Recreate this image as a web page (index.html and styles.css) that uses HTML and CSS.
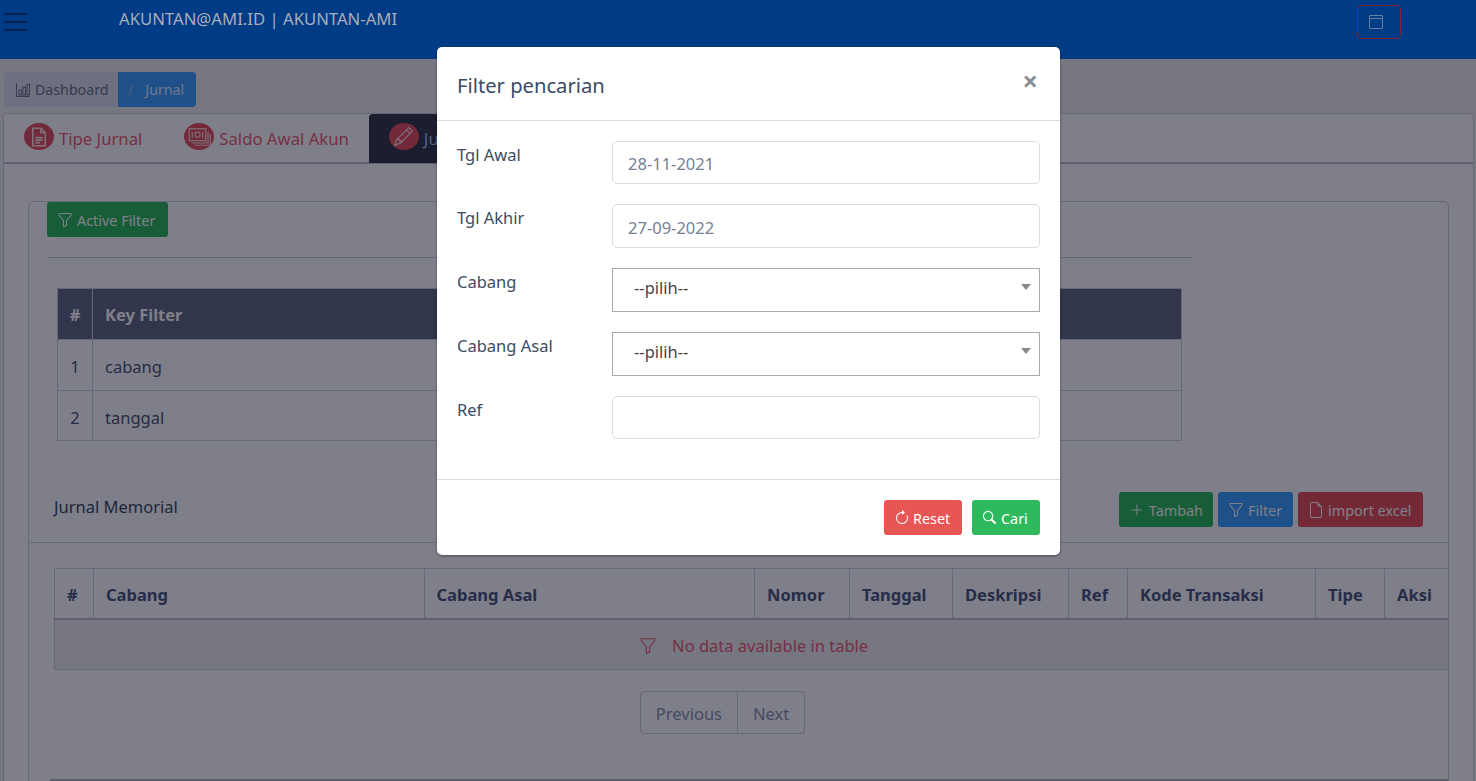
FILE: index.html
```html
<!DOCTYPE html>
<html>
<head>
  <title>Jurnal Memorial</title>
  <link rel="stylesheet" href="styles.css">
</head>
<body>
  <header class="topbar">
    <div class="burger"><span></span><span></span><span></span></div>
    <div class="user-name">AKUNTAN@AMI.ID | AKUNTAN-AMI</div>
    <button class="window-btn">
      <svg width="16" height="16" viewBox="0 0 16 16" fill="none" stroke="currentColor"><rect x="1.500" y="1.500" width="13" height="13" rx="0.500"/><path d="M1.500 4.500h13"/></svg>
    </button>
  </header>

  <nav class="crumbs">
    <a class="crumb crumb-home">
      <svg width="16" height="16" viewBox="0 0 16 16" fill="none" stroke="currentColor"><path d="M1.500 1.500v13h13"/><rect x="4" y="8" width="2.500" height="5"/><rect x="8" y="5" width="2.500" height="8"/><rect x="12" y="2.500" width="2.500" height="10.500"/></svg>
      Dashboard
    </a>
    <a class="crumb crumb-active"><span class="slash">/</span> Jurnal</a>
  </nav>

  <section class="tab-card">
    <div class="tabs">
      <a class="tab">
        <span class="tab-icon"><svg width="20" height="20" viewBox="0 0 16 16" fill="none" stroke="currentColor" stroke-width="1.300"><path d="M3 1h6.500L13 4.500V15H3z"/><path d="M9.500 1v3.500H13"/><path d="M5 8.500h6M5 10.500h6M5 12.500h4"/></svg></span>
        Tipe Jurnal
      </a>
      <a class="tab">
        <span class="tab-icon"><svg width="24" height="24" viewBox="0 0 16 16" fill="none" stroke="currentColor" stroke-width="0.800"><rect x="1.500" y="2.500" width="11" height="8"/><circle cx="7" cy="6.500" r="1.700"/><path d="M3.500 4.500v4M10.500 4.500v4"/><path d="M14 4.500v7.500H3M15.500 6v7.500H5"/></svg></span>
        Saldo Awal Akun
      </a>
      <a class="tab tab-active">
        <span class="tab-icon"><svg width="19" height="19" viewBox="0 0 16 16" fill="currentColor"><path d="M12.146.146a.5.5 0 0 1 .708 0l3 3a.5.5 0 0 1 0 .708l-10 10a.5.5 0 0 1-.168.11l-5 2a.5.5 0 0 1-.65-.65l2-5a.5.5 0 0 1 .11-.168l10-10zM11.207 2.500 13.500 4.793 14.793 3.500 12.500 1.207 11.207 2.500zm1.586 3L10.500 3.207 4 9.707V10h.5a.5.5 0 0 1 .5.5v.5h.5a.5.5 0 0 1 .5.5v.5h.293l6.500-6.500zm-9.761 5.175-.106.106-1.528 3.821 3.821-1.528.106-.106A.5.500 0 0 1 5 12.500V12h-.5a.5.500 0 0 1-.5-.5V11h-.5a.5.500 0 0 1-.468-.325z"/></svg></span>
        Jurnal Memorial
      </a>
    </div>

    <div class="tab-body">
      <div class="inner-card">
        <div class="filter-box">
          <button class="btn btn-green btn-active-filter">
            <svg class="funnel" width="16" height="16" viewBox="0 0 16 16" fill="currentColor"><path d="M1.500 1.500A.5.500 0 0 1 2 1h12a.5.500 0 0 1 .5.5v2a.5.500 0 0 1-.128.334L10 8.692V13.500a.5.500 0 0 1-.342.474l-3 1A.5.500 0 0 1 6 14.500V8.692L1.628 3.834A.5.500 0 0 1 1.500 3.500v-2zm1 .5v1.308l4.372 4.858A.5.500 0 0 1 7 8.500v5.306l2-.666V8.500a.5.500 0 0 1 .128-.334L13.500 3.308V2h-11z"/></svg>
            Active Filter
          </button>
          <hr class="rule">
          <table class="key-table">
            <thead>
              <tr><th class="col-no">#</th><th>Key Filter</th></tr>
            </thead>
            <tbody>
              <tr><td class="col-no">1</td><td>cabang</td></tr>
              <tr><td class="col-no">2</td><td>tanggal</td></tr>
            </tbody>
          </table>
        </div>

        <div class="list-head">
          <span class="list-title">Jurnal Memorial</span>
          <div class="list-actions">
            <button class="btn btn-green btn-tambah">
              <svg width="16" height="16" viewBox="0 0 16 16" fill="none" stroke="currentColor"><path d="M8 2.500v11M2.500 8h11"/></svg>
              Tambah
            </button>
            <button class="btn btn-blue btn-filter">
              <svg class="funnel" width="16" height="16" viewBox="0 0 16 16" fill="currentColor"><path d="M1.500 1.500A.5.500 0 0 1 2 1h12a.5.500 0 0 1 .5.5v2a.5.500 0 0 1-.128.334L10 8.692V13.500a.5.500 0 0 1-.342.474l-3 1A.5.500 0 0 1 6 14.500V8.692L1.628 3.834A.5.500 0 0 1 1.500 3.500v-2zm1 .5v1.308l4.372 4.858A.5.500 0 0 1 7 8.500v5.306l2-.666V8.500a.5.500 0 0 1 .128-.334L13.500 3.308V2h-11z"/></svg>
              Filter
            </button>
            <button class="btn btn-red btn-import">
              <svg width="16" height="16" viewBox="0 0 16 16" fill="currentColor"><path d="M14 4.500V14a2 2 0 0 1-2 2H4a2 2 0 0 1-2-2V2a2 2 0 0 1 2-2h5.500L14 4.500zm-3 0A1.500 1.500 0 0 1 9.500 3V1H4a1 1 0 0 0-1 1v12a1 1 0 0 0 1 1h8a1 1 0 0 0 1-1V4.500h-2z"/></svg>
              import excel
            </button>
          </div>
        </div>

        <table class="data-table">
          <thead>
            <tr>
              <th class="w-no">#</th>
              <th class="w-cabang">Cabang</th>
              <th class="w-cabang">Cabang Asal</th>
              <th class="w-nomor">Nomor</th>
              <th class="w-tanggal">Tanggal</th>
              <th class="w-desk">Deskripsi</th>
              <th class="w-ref">Ref</th>
              <th class="w-kode">Kode Transaksi</th>
              <th class="w-tipe">Tipe</th>
              <th>Aksi</th>
            </tr>
          </thead>
          <tbody>
            <tr>
              <td colspan="10" class="empty">
                <svg width="18" height="18" viewBox="0 0 16 16" fill="currentColor"><path d="M1.500 1.500A.5.500 0 0 1 2 1h12a.5.500 0 0 1 .5.5v2a.5.500 0 0 1-.128.334L10 8.692V13.500a.5.500 0 0 1-.342.474l-3 1A.5.500 0 0 1 6 14.500V8.692L1.628 3.834A.5.500 0 0 1 1.500 3.500v-2zm1 .5v1.308l4.372 4.858A.5.500 0 0 1 7 8.500v5.306l2-.666V8.500a.5.500 0 0 1 .128-.334L13.500 3.308V2h-11z"/></svg>
                No data available in table
              </td>
            </tr>
          </tbody>
        </table>

        <div class="pager">
          <a class="page-link">Previous</a>
          <a class="page-link">Next</a>
        </div>
        <div class="bottom-bar"></div>
      </div>
    </div>
  </section>

  <div class="backdrop"></div>

  <div class="modal">
    <div class="modal-head">
      <h5 class="modal-title">Filter pencarian</h5>
      <span class="modal-close">×</span>
    </div>
    <div class="modal-body">
      <div class="form-row">
        <label for="tglAwal">Tgl Awal</label>
        <input type="text" id="tglAwal" class="field" value="28-11-2021">
      </div>
      <div class="form-row">
        <label for="tglAkhir">Tgl Akhir</label>
        <input type="text" id="tglAkhir" class="field" value="27-09-2022">
      </div>
      <div class="form-row">
        <label>Cabang</label>
        <div class="picker">--pilih--<span class="picker-arrow"></span></div>
      </div>
      <div class="form-row">
        <label>Cabang Asal</label>
        <div class="picker">--pilih--<span class="picker-arrow"></span></div>
      </div>
      <div class="form-row">
        <label for="ref">Ref</label>
        <input type="text" id="ref" class="field">
      </div>
    </div>
    <div class="modal-foot">
      <button class="btn btn-reset">
        <svg width="16" height="16" viewBox="0 0 16 16" fill="currentColor"><path d="M8 3a5 5 0 1 0 4.546 2.914.5.500 0 0 1 .908-.417A6 6 0 1 1 8 2v1z"/><path d="M8 4.466V.534a.25.25 0 0 1 .41-.192l2.360 1.966c.12.1.12.284 0 .384L8.410 4.658A.25.25 0 0 1 8 4.466z"/></svg>
        Reset
      </button>
      <button class="btn btn-cari">
        <svg width="15" height="15" viewBox="0 0 16 16" fill="none" stroke="currentColor" stroke-width="1.200"><circle cx="6.500" cy="6.500" r="5"/><path d="M10.300 10.300l4.200 4.200" stroke-width="2.200"/></svg>
        Cari
      </button>
    </div>
  </div>
</body>
</html>
```
FILE: styles.css
```css
* {
  box-sizing: border-box;
}

body {
  font-family: "Noto Sans", Arial, sans-serif;
  font-size: 16.500px;
  color: #4a5a78;
  background-color: #eeeeef;
  margin: 0;
  height: 781px;
  overflow: hidden;
  position: relative;
}

/* top bar sits above the backdrop */
.topbar {
  position: relative;
  z-index: 20;
  height: 59px;
  background-color: #003b85;
  display: flex;
  align-items: flex-start;
}

.burger {
  width: 23px;
  margin: 13px 0 0 4px;
  display: flex;
  flex-direction: column;
  gap: 6px;
}

.burger span {
  height: 2px;
  background-color: #00234f;
}

.user-name {
  margin: 8px 0 0 92px;
  color: #a9aebb;
  font-size: 16.700px;
  line-height: 22px;
  width: 1238px;
}

.window-btn {
  width: 44px;
  height: 34px;
  margin-top: 5px;
  padding: 0;
  background: none;
  border: 1px solid #7d2330;
  border-radius: 4px;
  color: #6d7f9f;
  display: flex;
  align-items: center;
  justify-content: center;
}

.window-btn svg {
  margin-right: 7px;
}

.crumbs {
  display: flex;
  margin: 13px 0 6px 4px;
  height: 35px;
}

.crumb {
  display: flex;
  align-items: center;
  gap: 4px;
  font-size: 14.200px;
}

.crumb-home {
  width: 114px;
  padding-left: 11px;
  background-color: #dee0ea;
  color: #6a7690;
  border-radius: 4px 0 0 4px;
}

.crumb-active {
  width: 78px;
  padding-left: 10px;
  gap: 12px;
  background-color: #3fa0ff;
  color: #e0efff;
  border-radius: 0 4px 4px 0;
}

.slash {
  color: #9dbbe0;
}

.tab-card {
  margin: 0 2px 0 3px;
  height: 668px;
  background-color: #ffffff;
  border: 1px solid #cfd0dc;
  border-bottom: none;
  border-radius: 4px 4px 0 0;
}

.tabs {
  display: flex;
  height: 50px;
  border-bottom: 2px solid #c0c1d0;
}

.tab {
  display: flex;
  align-items: center;
  gap: 5px;
  padding: 0 20px;
  height: 49px;
  color: #ee5f70;
  font-size: 16.700px;
}

.tab:first-child {
  margin-right: 2px;
}

.tab-icon {
  width: 30px;
  height: 27px;
  border-radius: 50%;
  background-color: #e5535f;
  color: #fcdfe0;
  display: flex;
  align-items: center;
  justify-content: center;
  margin-top: -4px;
}

.tab-active {
  background-color: #393a48;
  width: 210px;
  color: #9ec5f5;
  border-radius: 4px 4px 0 0;
}

.tab-body {
  padding: 37px 24px 0 24px;
}

.inner-card {
  height: 581px;
  border: 1px solid #cfd0dc;
  border-bottom: none;
  border-radius: 6px 6px 0 0;
}

.filter-box {
  width: 1163px;
  padding-left: 18px;
}

.btn {
  display: inline-flex;
  align-items: center;
  gap: 4px;
  height: 35px;
  padding: 2px 10px 0;
  border: none;
  border-radius: 3px;
  font-family: inherit;
  font-size: 14.400px;
  color: #ffffff;
  white-space: nowrap;
}

.btn svg {
  margin-top: -2px;
}

.btn-active-filter {
  width: 121px;
}

.btn-tambah {
  width: 94px;
}

.btn-filter {
  width: 75px;
}

.btn-import {
  width: 125px;
}

.btn-green {
  background-color: #2eba5c;
}

.btn-blue {
  background-color: #3ca0ff;
}

.btn-red {
  background-color: #e65459;
}

.rule {
  margin: 20px 0 30px;
  border: none;
  border-top: 1px solid #c5c6d4;
}

.key-table {
  width: 1125px;
  margin-left: 10px;
  border-collapse: collapse;
  table-layout: fixed;
}

.key-table th,
.key-table td {
  border: 1px solid #cfd0dc;
  padding: 4px 12px 0;
  text-align: left;
  height: 50.500px;
}

.key-table th {
  background-color: #626c85;
  color: #ffffff;
  font-weight: 700;
  height: 51px;
  padding-top: 0;
}

.key-table .col-no {
  width: 35px;
  text-align: center;
  padding-left: 0;
  padding-right: 0;
}

.list-head {
  display: flex;
  justify-content: space-between;
  margin-top: 51px;
  padding: 0 25px 15px 25px;
  border-bottom: 1px solid #cfd0dc;
}

.list-title {
  line-height: 30px;
  color: #3c4b64;
}

.list-actions {
  display: flex;
  gap: 5px;
}

.data-table {
  width: 1395px;
  margin: 25px 0 0 25px;
  border-collapse: collapse;
  table-layout: fixed;
}

.data-table th {
  height: 50px;
  padding: 2px 12px 0;
  text-align: left;
  font-weight: 700;
  color: #4c5a80;
  border: 1px solid #cfd0dc;
  border-bottom: 2px solid #c0c1d0;
}

.w-no { width: 39px; }
.w-cabang { width: 330.500px; }
.w-nomor { width: 95px; }
.w-tanggal { width: 103px; }
.w-desk { width: 116px; }
.w-ref { width: 59px; }
.w-kode { width: 188px; }
.w-tipe { width: 69px; }

.empty {
  height: 51px;
  text-align: center;
  background-color: #eeeef0;
  color: #ee5f70;
  border: 1px solid #cfd0dc;
  padding: 2px 0 0 4px;
}

.empty svg {
  vertical-align: -3px;
  margin-right: 11px;
}

.pager {
  display: flex;
  justify-content: center;
  margin-top: 21px;
  padding-right: 32px;
}

.page-link {
  height: 43px;
  padding: 2px 15px 0;
  display: flex;
  align-items: center;
  border: 1px solid #cfd0dc;
  color: #8d97b3;
}

.page-link:first-child {
  border-radius: 4px 0 0 4px;
}

.page-link:last-child {
  border-left: none;
  border-radius: 0 4px 4px 0;
}

.bottom-bar {
  height: 2px;
  margin: 45px 0 0 21px;
  background-color: #b5b6c5;
}

.backdrop {
  position: absolute;
  top: 0;
  left: 0;
  right: 0;
  bottom: 0;
  z-index: 10;
  background-color: #000013;
  opacity: 0.5;
}

.modal {
  position: absolute;
  z-index: 30;
  top: 47px;
  left: 437px;
  width: 623px;
  height: 508px;
  background-color: #fff;
  border-radius: 5px;
  box-shadow: 0 1px 3px rgba(0, 0, 19, 0.4);
}

.modal-head {
  height: 74px;
  padding: 0 20px;
  display: flex;
  align-items: center;
  justify-content: space-between;
  border-bottom: 1px solid #d8dbe0;
}

.modal-title {
  margin: 3px 0 0;
  font-size: 20.200px;
  font-weight: 400;
  color: #3c4b64;
}

.modal-close {
  font-size: 27px;
  font-weight: 700;
  line-height: 1;
  color: #888d96;
  margin: -6px 2px 0 0;
}

.modal-body {
  padding: 19.750px 20px 0 20px;
  height: 359px;
  border-bottom: 1px solid #d8dbe0;
  color: #3c4b64;
}

.form-row {
  display: grid;
  grid-template-columns: 155px 428px;
  margin-bottom: 20px;
}

.form-row label {
  padding-top: 2px;
  line-height: 24px;
}

.field {
  height: 43.500px;
  padding: 2px 15px 0;
  border: 1px solid #d8dbe0;
  border-radius: 5px;
  font-family: inherit;
  font-size: 16.500px;
  color: #768192;
}

.picker {
  height: 44px;
  padding: 0 0 5px 21px;
  display: flex;
  align-items: center;
  border: 1px solid #aaa;
  color: #444;
  position: relative;
}

.picker-arrow {
  position: absolute;
  top: 15px;
  right: 8px;
  border-style: solid;
  border-width: 6px 5px 0 5px;
  border-color: #888 transparent transparent transparent;
}

.modal-foot {
  display: flex;
  justify-content: flex-end;
  gap: 10px;
  padding: 20px;
}

.btn-reset {
  width: 78px;
  gap: 3px;
  background-color: #e85555;
}

.btn-cari {
  width: 68px;
  background-color: #2eba5c;
}
```
